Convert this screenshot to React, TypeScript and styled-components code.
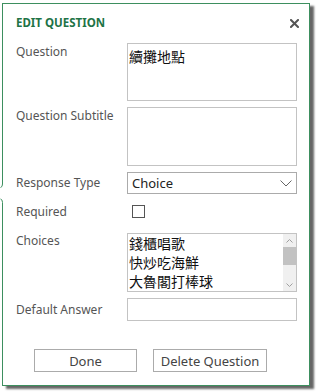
import styled, { createGlobalStyle } from 'styled-components';

const GlobalStyle = createGlobalStyle`
  html, body {
    margin: 0;
    padding: 0;
    background: #ffffff;
  }
  body {
    font-family: 'Segoe UI', 'Noto Sans', 'Open Sans', sans-serif;
  }
`;

const Page = styled.div`
  padding: 3px 0 0 2px;
  width: 318px;
  height: 392px;
  box-sizing: border-box;
`;

const Frame = styled.div`
  position: relative;
  width: 308px;
  height: 383px;
  box-sizing: border-box;
  border: 1px solid #3d8f5f;
  background: #ffffff;
  box-shadow: 4px 3px 2px rgba(0, 0, 0, 0.6);
  padding: 11px 11px 0 13px;
  display: flex;
  flex-direction: column;
`;

const Notch = styled.svg`
  position: absolute;
  left: -3px;
  top: 176px;
  width: 6px;
  height: 26px;
  overflow: visible;
`;

const Header = styled.div`
  display: flex;
  align-items: center;
  justify-content: space-between;
  height: 16px;
  margin-bottom: 12px;
  margin-right: -1px;
`;

const Title = styled.h1`
  margin: 0;
  font-size: 11.5px;
  line-height: 16px;
  font-weight: 700;
  color: #217346;
`;

const CloseButton = styled.button`
  border: none;
  background: none;
  padding: 0;
  width: 9px;
  height: 9px;
  display: flex;
  cursor: pointer;
`;

const Form = styled.div`
  display: flex;
  flex-direction: column;
  gap: 6px;
`;

const Row = styled.div<{ $align?: 'start' | 'center'; $height?: number }>`
  display: grid;
  grid-template-columns: 111px 170px;
  align-items: ${p => (p.$align === 'center' ? 'center' : 'start')};
  ${p => (p.$height ? `height: ${p.$height}px;` : '')}
`;

const Label = styled.label<{ $pad?: number }>`
  font-size: 12px;
  line-height: 16px;
  color: #555555;
  padding-top: ${p => p.$pad ?? 0}px;
  white-space: nowrap;
`;

const TextBox = styled.div<{ $height: number }>`
  height: ${p => p.$height}px;
  box-sizing: border-box;
  border: 1px solid #c3c3c3;
  background: #ffffff;
  padding: 3px 1px;
  font-family: 'Noto Sans CJK TC', 'Noto Sans CJK SC', sans-serif;
  font-size: 14px;
  line-height: 18px;
  color: #111111;
`;

const Select = styled.div`
  height: 22px;
  box-sizing: border-box;
  border: 1px solid #ababab;
  display: flex;
  align-items: center;
  justify-content: space-between;
  padding: 0 4px 0 4px;
  font-size: 13px;
  color: #222222;
`;

const Checkbox = styled.div`
  width: 13px;
  height: 13px;
  box-sizing: border-box;
  border: 1px solid #555555;
  margin-left: 5px;
  margin-top: 5px;
`;

const ListBox = styled.div`
  height: 59px;
  box-sizing: border-box;
  border: 1px solid #c3c3c3;
  display: flex;
`;

const ListItems = styled.div`
  flex: 1;
  overflow: hidden;
  font-family: 'Noto Sans CJK TC', 'Noto Sans CJK SC', sans-serif;
  font-size: 14px;
  line-height: 19px;
  color: #111111;
  padding-left: 1px;
`;

const Scrollbar = styled.div`
  width: 13px;
  background: #f0f0f0;
  display: flex;
  flex-direction: column;
  align-items: center;
`;

const ScrollArrow = styled.div`
  height: 13px;
  width: 13px;
  display: flex;
  align-items: center;
  justify-content: center;
`;

const ScrollThumb = styled.div`
  width: 13px;
  height: 18px;
  background: #c2c2c2;
`;

const ScrollSpace = styled.div`
  flex: 1;
`;

const Buttons = styled.div`
  display: flex;
  gap: 16px;
  margin-top: 28px;
  padding-left: 18px;
`;

const Button = styled.button<{ $width: number }>`
  width: ${p => p.$width}px;
  height: 23px;
  box-sizing: border-box;
  border: 1px solid #ababab;
  background: #ffffff;
  font-family: 'Segoe UI', 'Noto Sans', 'Open Sans', sans-serif;
  font-size: 13px;
  color: #444444;
  padding: 0;
  cursor: pointer;
`;

const choices = ['錢櫃唱歌', '快炒吃海鮮', '大魯閣打棒球'];

export default function App() {
  return (
    <Page>
      <GlobalStyle />
      <Frame>
        <Notch viewBox="0 0 6 26">
          <rect x="1" y="4" width="4" height="19" fill="#ffffff" />
          <path d="M2.5 0 V4 Q2.5 7 0.5 7.5" fill="none" stroke="#3d8f5f" strokeWidth="1" />
          <path d="M0.5 19 Q2.5 19.5 2.5 22.5 V26" fill="none" stroke="#3d8f5f" strokeWidth="1" />
        </Notch>
        <Header>
          <Title>EDIT QUESTION</Title>
          <CloseButton aria-label="Close">
            <svg width="9" height="9" viewBox="0 0 9 9">
              <path d="M1 1 L8 8 M8 1 L1 8" stroke="#555555" strokeWidth="2" strokeLinecap="square" />
            </svg>
          </CloseButton>
        </Header>
        <Form>
          <Row>
            <Label $pad={1}>Question</Label>
            <TextBox $height={58}>續攤地點</TextBox>
          </Row>
          <Row>
            <Label $pad={1}>Question Subtitle</Label>
            <TextBox $height={59} />
          </Row>
          <Row $align="center">
            <Label>Response Type</Label>
            <Select>
              <span>Choice</span>
              <svg width="12" height="7" viewBox="0 0 12 7">
                <path d="M0.5 0.5 L6 6 L11.5 0.5" fill="none" stroke="#666666" strokeWidth="1" />
              </svg>
            </Select>
          </Row>
          <Row $height={27}>
            <Label $pad={4}>Required</Label>
            <Checkbox />
          </Row>
          <Row>
            <Label $pad={0}>Choices</Label>
            <ListBox>
              <ListItems>
                {choices.map(c => (
                  <div key={c}>{c}</div>
                ))}
              </ListItems>
              <Scrollbar>
                <ScrollArrow>
                  <svg width="7" height="4" viewBox="0 0 7 4">
                    <path d="M0.5 3.5 L3.5 0.5 L6.5 3.5" fill="none" stroke="#a0a0a0" strokeWidth="1" />
                  </svg>
                </ScrollArrow>
                <ScrollThumb />
                <ScrollSpace />
                <ScrollArrow>
                  <svg width="7" height="4" viewBox="0 0 7 4">
                    <path d="M0.5 0.5 L3.5 3.5 L6.5 0.5" fill="none" stroke="#a0a0a0" strokeWidth="1" />
                  </svg>
                </ScrollArrow>
              </Scrollbar>
            </ListBox>
          </Row>
          <Row $align="center">
            <Label>Default Answer</Label>
            <TextBox $height={23} />
          </Row>
        </Form>
        <Buttons>
          <Button $width={103}>Done</Button>
          <Button $width={114}>Delete Question</Button>
        </Buttons>
      </Frame>
    </Page>
  );
}
